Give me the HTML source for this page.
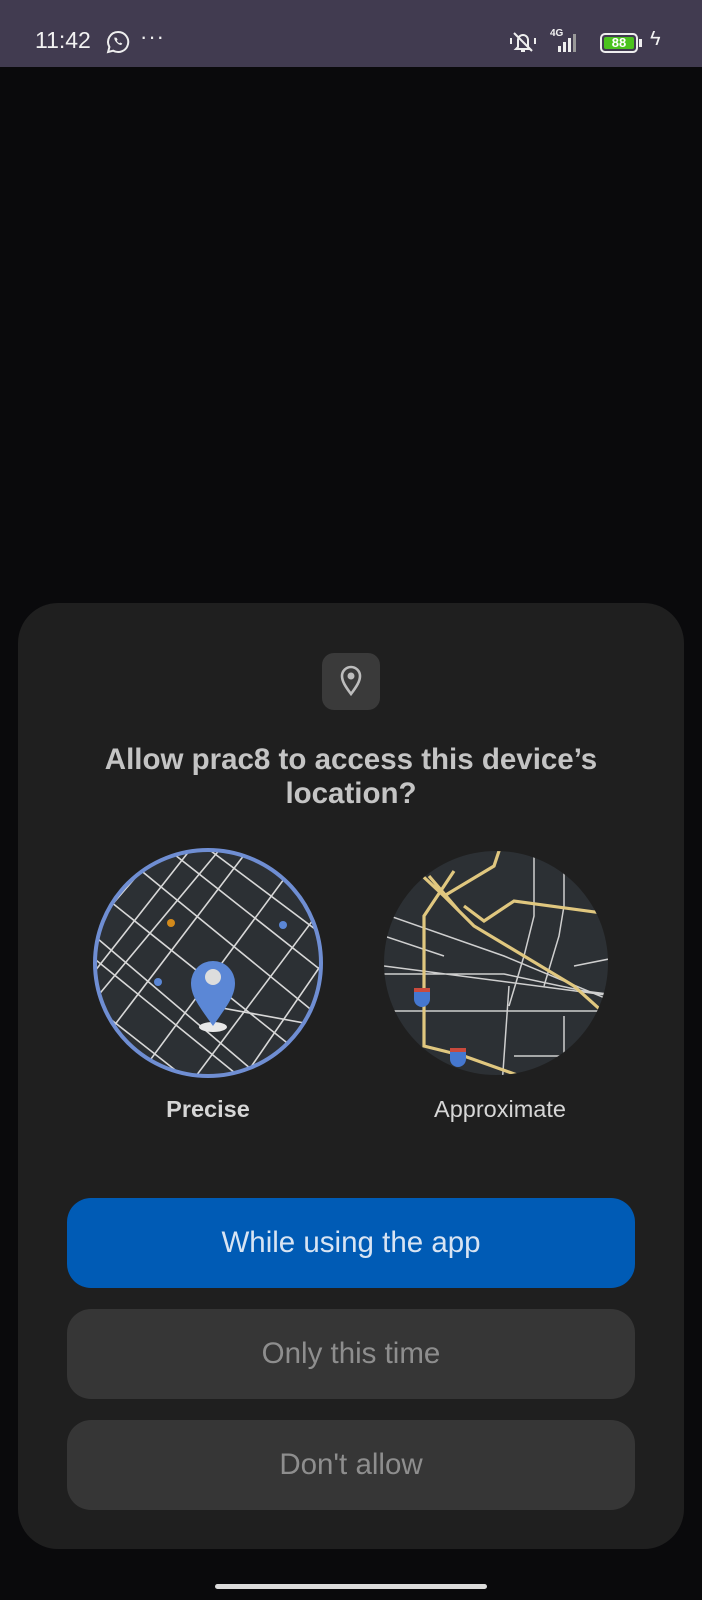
<!DOCTYPE html>
<html><head><meta charset="utf-8"><style>
*{margin:0;padding:0;box-sizing:border-box}
body{width:702px;height:1600px;background:#0a0a0c;font-family:"Liberation Sans",Roboto,sans-serif;position:relative;overflow:hidden}
.sb{position:absolute;left:0;top:0;width:702px;height:67px;background:#413b50;color:#f2f2f2}
.sheet{position:absolute;left:18px;top:603px;width:666px;height:946px;background:#1f1f1f;border-radius:40px}
.ic{position:absolute;left:304px;top:50px;width:58px;height:57px;background:#3a3a3a;border-radius:12px}
.title{position:absolute;left:0;width:666px;top:140px;text-align:center;color:#c4c4c4;font-size:29.5px;font-weight:bold;line-height:34px}
.lbl{position:absolute;top:493px;font-size:23.5px;color:#d6d6d6;text-align:center;width:240px}
.btn{position:absolute;left:49px;width:568px;height:90px;border-radius:24px;background:#363636;color:#8e8e8e;font-size:29.5px;display:flex;align-items:center;justify-content:center}
</style></head><body>
<div class="sb">
<div style="position:absolute;left:35px;top:27px;font-size:23px">11:42</div>
<svg style="position:absolute;left:106px;top:30px" width="24" height="24" viewBox="0 0 24 24"><path d="M12 2a10 10 0 0 0-8.6 15l-1.3 5 5.2-1.3A10 10 0 1 0 12 2z" fill="none" stroke="#eee" stroke-width="2"/><path d="M8.5 7.5c-.5 1 .2 3 2 5s4 2.8 5 2.3l.8-1.3-2-1-1 .8c-1-.5-2-1.5-2.5-2.5l.8-1-1-2z" fill="#eee"/></svg>
<div style="position:absolute;left:140px;top:24px;font-size:22px;letter-spacing:1px">···</div>
<svg style="position:absolute;left:509px;top:29px" width="28" height="26" viewBox="0 0 28 26"><path d="M9 18V11a5 5 0 0 1 10 0v7l2 2H7z" fill="none" stroke="#eee" stroke-width="2"/><path d="M12 22h4" stroke="#eee" stroke-width="2"/><path d="M5 4l18 18" stroke="#eee" stroke-width="2"/><path d="M2 9v6M26 9v6" stroke="#eee" stroke-width="2"/></svg>
<div style="position:absolute;left:550px;top:28px;font-size:10px;font-weight:bold">4G</div>
<svg style="position:absolute;left:548px;top:32px" width="40" height="22" viewBox="0 0 40 22"><rect x="10" y="14" width="3" height="6" fill="#eee"/><rect x="15" y="10" width="3" height="10" fill="#eee"/><rect x="20" y="6" width="3" height="14" fill="#eee"/><rect x="25" y="2" width="3" height="18" fill="#999"/></svg>
<div style="position:absolute;left:600px;top:33px;width:38px;height:20px;border:2px solid #eee;border-radius:5px;padding:2px"><div style="background:#4bc31e;height:100%;border-radius:2px;color:#fff;font-size:13px;font-weight:bold;text-align:center;line-height:12px">88</div></div>
<div style="position:absolute;left:639px;top:39px;width:3px;height:8px;background:#eee"></div>
<div style="position:absolute;left:650px;top:28px;font-size:20px">ϟ</div>
</div>

<div class="sheet">
<div class="ic"><svg style="position:absolute;left:17px;top:12px" width="24" height="32" viewBox="0 0 24 32"><path d="M12 29C6 21 3 16 3 11a9 9 0 0 1 18 0c0 5-3 10-9 18z" fill="none" stroke="#bdbdbd" stroke-width="2.6"/><circle cx="12" cy="11" r="3.5" fill="#bdbdbd"/></svg></div>
<div class="title">Allow prac8 to access this device’s<br>location?</div>

<svg style="position:absolute;left:73px;top:243px" width="234" height="234" viewBox="0 0 234 234">
<defs><clipPath id="c1"><circle cx="117" cy="117" r="113"/></clipPath></defs>
<circle cx="117" cy="117" r="113" fill="#2c3034"/>
<g clip-path="url(#c1)" stroke="#d8d8d8" stroke-width="1.6" fill="none">
<path d="M0 40L200 200M-20 70L180 240M0 110L160 240M20 0L240 180M60 -10L250 140M100 -10L260 110M-10 150L130 260M150 -10L260 70"/>
<path d="M0 210L160 0M-10 170L140 -10M0 130L110 -10M-10 95L80 -10M40 240L210 10M90 250L240 50M140 250L250 90M180 250L250 160M120 160L230 180"/>
</g>
<circle cx="117" cy="117" r="113" fill="none" stroke="#6f8ed3" stroke-width="4"/>
<ellipse cx="122" cy="181" rx="14" ry="5" fill="#e8e8e8"/>
<path d="M122 180C108 160 100 150 100 137a22 22 0 0 1 44 0c0 13-8 23-22 43z" fill="#5b87d6"/>
<circle cx="122" cy="131" r="8" fill="#ddd"/>
<circle cx="80" cy="77" r="4" fill="#d38a1b"/><circle cx="192" cy="79" r="4" fill="#5b87d6"/><circle cx="67" cy="136" r="4" fill="#5b87d6"/>
</svg>

<svg style="position:absolute;left:366px;top:243px" width="234" height="234" viewBox="0 0 234 234">
<defs><clipPath id="c2"><circle cx="112" cy="117" r="112"/></clipPath></defs>
<circle cx="112" cy="117" r="112" fill="#2c3034"/>
<g clip-path="url(#c2)" fill="none">
<g stroke="#cfcfcf" stroke-width="1.5"><path d="M0 68L120 110L240 160M0 120L230 150M0 128L120 128L200 145L240 150M0 165L240 165M150 0V70L140 110L125 160M125 140L118 240M180 0V60L175 90L160 140M0 90L60 110M180 170L180 230M130 210L240 210M190 120L240 110"/></g>
<g stroke="#e0c77f" stroke-width="3.2"><path d="M30 22L60 50L110 20L120 -10M60 50L90 80L190 140L240 185M70 25L40 70L40 200L80 210L150 235M80 60L100 75L130 55L240 70M45 30L75 65"/></g>
</g>
<path d="M30 145h16v8a8 8 0 0 1-16 0z" fill="#4577cf"/><rect x="30" y="142" width="16" height="4" fill="#c94a3d"/>
<path d="M66 205h16v8a8 8 0 0 1-16 0z" fill="#4577cf"/><rect x="66" y="202" width="16" height="4" fill="#c94a3d"/>
</svg>

<div class="lbl" style="left:70px;font-weight:bold">Precise</div>
<div class="lbl" style="left:362px">Approximate</div>

<div class="btn" style="top:595px;background:#005bb5;color:#d8e4f3">While using the app</div>
<div class="btn" style="top:706px">Only this time</div>
<div class="btn" style="top:817px">Don't allow</div>
</div>
<div style="position:absolute;left:215px;top:1584px;width:272px;height:5px;border-radius:3px;background:#dcdcdc"></div>
</body></html>
